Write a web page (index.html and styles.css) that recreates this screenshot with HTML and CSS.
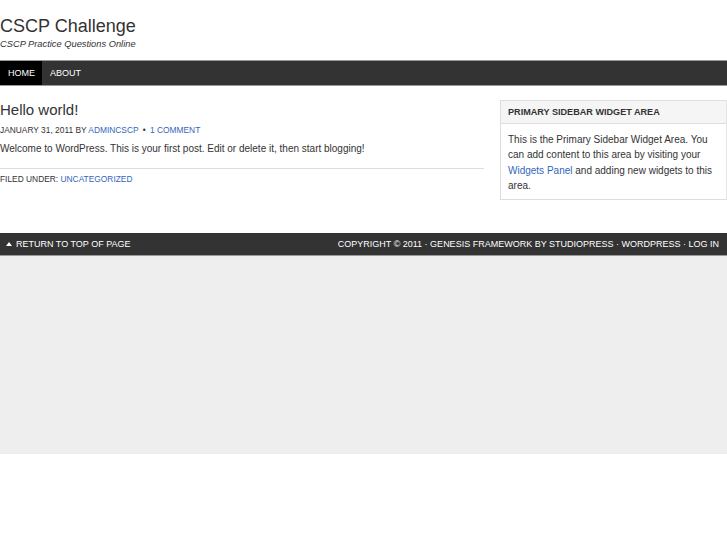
FILE: index.html
```html
<!DOCTYPE html>
<html>
<head>
<meta charset="utf-8">
<link rel="stylesheet" href="styles.css">
</head>
<body>
<div class="header">
  <div class="site-title">CSCP Challenge</div>
  <div class="site-desc">CSCP Practice Questions Online</div>
</div>
<div class="nav">
  <a class="nav-item current">HOME</a>
  <a class="nav-item">ABOUT</a>
</div>
<div class="inner">
  <div class="content">
    <h2 class="post-title">Hello world!</h2>
    <div class="post-info">JANUARY 31, 2011 BY <a>ADMINCSCP</a> <span class="dot">&#8226;</span> <a>1 COMMENT</a></div>
    <p class="entry">Welcome to WordPress. This is your first post. Edit or delete it, then start blogging!</p>
    <div class="post-meta">FILED UNDER: <a>UNCATEGORIZED</a></div>
  </div>
  <div class="sidebar">
    <div class="widget">
      <h4 class="widget-title">PRIMARY SIDEBAR WIDGET AREA</h4>
      <div class="widget-body">This is the Primary Sidebar Widget Area. You can add content to this area by visiting your <a>Widgets Panel</a> and adding new widgets to this area.</div>
    </div>
  </div>
</div>
<div class="footer">
  <div class="footer-left"><span class="arrow"></span>RETURN TO TOP OF PAGE</div>
  <div class="footer-right">COPYRIGHT &copy; 2011 &middot; GENESIS FRAMEWORK BY STUDIOPRESS &middot; WORDPRESS &middot; LOG IN</div>
</div>
<div class="below"></div>
</body>
</html>
```
FILE: styles.css
```css
body {
  margin: 0;
  font-family: "Liberation Sans", Arial, sans-serif;
  color: #333;
  background: #fff;
}
a { color: #3366bb; text-decoration: none; }
.header {
  height: 60px;
  box-sizing: border-box;
  padding-top: 15px;
}
.site-title {
  font-size: 18px;
  line-height: 22px;
  color: #333;
}
.site-desc {
  font-size: 9.3px;
  font-style: italic;
  line-height: 14px;
  color: #333;
}
.nav {
  display: flex;
  height: 24px;
  background: #333;
  border-top: 1px solid #999;
  border-bottom: 1px solid #999;
}
.nav-item {
  color: #fff;
  font-size: 9px;
  line-height: 24px;
  padding: 0 8px;
}
.nav-item.current { background: #000; padding: 0 7px 0 8px; }
.inner {
  display: flex;
  height: 147px;
}
.content {
  width: 484px;
  padding-top: 14px;
}
.post-title {
  font-size: 15px;
  font-weight: normal;
  line-height: 20px;
  margin: 0 0 4px;
  color: #333;
}
.post-info {
  font-size: 8.4px;
  line-height: 12px;
  color: #333;
}
.dot { margin: 0 2px; }
.entry {
  font-size: 10px;
  line-height: 14px;
  margin: 6px 0 0;
  padding-bottom: 12px;
  border-bottom: 1px solid #ddd;
}
.post-meta {
  font-size: 8.4px;
  line-height: 12px;
  margin-top: 4px;
}
.sidebar {
  margin-left: 16px;
  padding-top: 14px;
  width: 227px;
}
.widget {
  border: 1px solid #ddd;
  border-right-color: #e6e6e6;
}
.widget-title {
  margin: 0;
  background: #f5f5f5;
  font-size: 9.1px;
  font-weight: bold;
  line-height: 22px;
  padding: 0 7px;
  color: #333;
  border-bottom: 1px solid #ddd;
}
.widget-body {
  font-size: 10px;
  line-height: 15.3px;
  padding: 8px 10px 6px 7px;
}
.footer {
  display: flex;
  justify-content: space-between;
  height: 22px;
  background: #333;
  color: #fff;
  font-size: 9px;
  line-height: 22px;
  border-bottom: 1px solid #999;
  padding: 0 8px 0 6px;
}
.arrow {
  display: inline-block;
  width: 0; height: 0;
  border-left: 3.5px solid transparent;
  border-right: 3.5px solid transparent;
  border-bottom: 4px solid #fff;
  margin-right: 4px;
  vertical-align: 1px;
}
.below {
  height: 198px;
  background: #eee;
}
```
